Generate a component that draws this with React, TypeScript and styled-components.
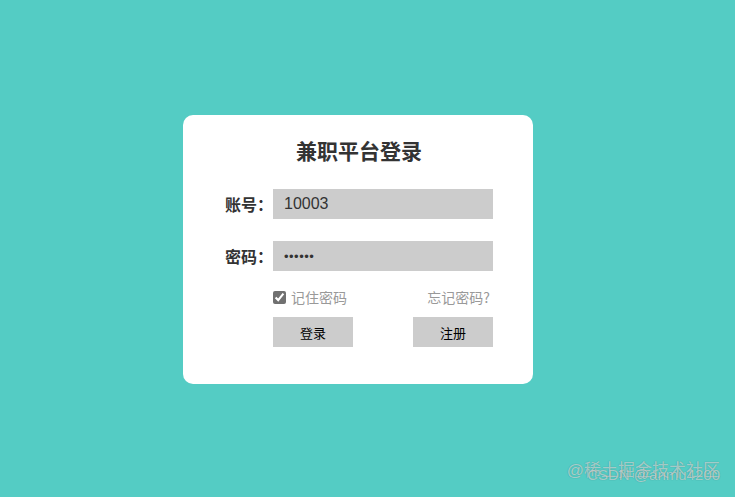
import { useState } from 'react';
import styled, { createGlobalStyle } from 'styled-components';

const GlobalStyle = createGlobalStyle`
    html, body {
        margin: 0;
        padding: 0;
    }

    body {
        background: #54ccc4;
        font-family: 'Liberation Sans', 'Noto Sans CJK SC', sans-serif;
    }
`;

const Page = styled.div`
    position: relative;
    display: flex;
    align-items: center;
    justify-content: center;
    height: 497px;
    padding: 2px 19px 0 0;
    box-sizing: border-box;
    overflow: hidden;
`;

const Card = styled.form`
    display: flex;
    flex-direction: column;
    align-items: center;
    width: 350px;
    height: 269px;
    box-sizing: border-box;
    padding: 20px 0 0 2px;
    border-radius: 10px;
    background: #fff;
`;

const Title = styled.h2`
    margin: 0 0 24px;
    height: 30px;
    line-height: 30px;
    font-size: 21px;
    font-weight: bold;
    color: #333;
    font-family: 'Noto Sans CJK SC', sans-serif;
`;

const FieldRow = styled.div`
    display: flex;
    align-items: center;
    margin-bottom: 22px;
`;

const Label = styled.label`
    width: 48px;
    font-size: 16px;
    font-weight: bold;
    color: #333;
    font-family: 'Noto Sans CJK SC', sans-serif;
`;

const Input = styled.input<{ $dots?: boolean }>`
    width: 220px;
    height: 30px;
    box-sizing: border-box;
    padding: 0 11px;
    border: none;
    outline: none;
    background: #ccc;
    color: #333;
    font-size: ${(p) => (p.$dots ? '13px' : '16px')};
    font-family: 'Liberation Sans', sans-serif;
    letter-spacing: ${(p) => (p.$dots ? '0.5px' : '0')};
`;

const Options = styled.div`
    display: flex;
    justify-content: space-between;
    align-items: center;
    width: 220px;
    margin: -6px 0 0 48px;
    height: 20px;
`;

const Remember = styled.label`
    display: flex;
    align-items: center;
    gap: 5px;
    font-size: 14px;
    color: #999;
    font-family: 'Noto Sans CJK SC', sans-serif;
`;

const Check = styled.input`
    width: 13px;
    height: 13px;
    margin: 0;
    accent-color: #707070;
`;

const Forgot = styled.a`
    margin-right: 3px;
    font-size: 14px;
    color: #999;
    text-decoration: none;
    font-family: 'Noto Sans CJK SC', sans-serif;
`;

const Buttons = styled.div`
    display: flex;
    justify-content: space-between;
    width: 220px;
    margin: 10px 0 0 48px;
`;

const Button = styled.button`
    width: 80px;
    height: 30px;
    border: none;
    background: #ccc;
    color: #000;
    font-size: 13px;
    font-family: 'Noto Sans CJK SC', sans-serif;
    cursor: pointer;
`;

const Watermark = styled.div`
    position: absolute;
    right: 15px;
    bottom: 11px;
    width: 160px;
    height: 28px;
    pointer-events: none;
`;

const MarkText = styled.span<{ $top: number; $size: number }>`
    position: absolute;
    right: 0;
    top: ${(p) => p.$top}px;
    font-size: ${(p) => p.$size}px;
    white-space: nowrap;
    color: rgba(255, 255, 255, 0.55);
    text-shadow: 0 0 1px rgba(0, 0, 0, 0.35);
    font-family: 'Liberation Sans', 'Noto Sans CJK SC', sans-serif;
`;

export default function App() {
    const [account, setAccount] = useState('10003');
    const [password, setPassword] = useState('123456');
    const [remember, setRemember] = useState(true);

    return (
        <>
            <GlobalStyle />
            <Page>
                <Card onSubmit={(e) => e.preventDefault()}>
                    <Title>兼职平台登录</Title>

                    <FieldRow>
                        <Label htmlFor="account">账号：</Label>
                        <Input
                            id="account"
                            value={account}
                            onChange={(e) => setAccount(e.target.value)}
                        />
                    </FieldRow>

                    <FieldRow>
                        <Label htmlFor="password">密码：</Label>
                        <Input
                            id="password"
                            type="password"
                            $dots
                            value={password}
                            onChange={(e) => setPassword(e.target.value)}
                        />
                    </FieldRow>

                    <Options>
                        <Remember>
                            <Check
                                type="checkbox"
                                checked={remember}
                                onChange={() => setRemember((prev) => !prev)}
                            />
                            记住密码
                        </Remember>
                        <Forgot href="#">忘记密码?</Forgot>
                    </Options>

                    <Buttons>
                        <Button type="submit">登录</Button>
                        <Button type="button">注册</Button>
                    </Buttons>
                </Card>

                <Watermark>
                    <MarkText $top={-2} $size={17}>@稀土掘金技术社区</MarkText>
                    <MarkText $top={8} $size={15}>CSDN @anmu4200</MarkText>
                </Watermark>
            </Page>
        </>
    );
}
